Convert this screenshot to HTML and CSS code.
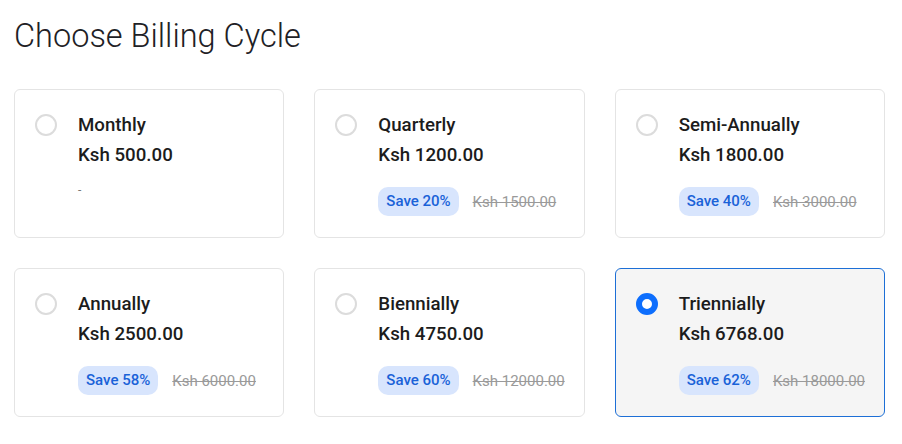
FILE: index.html
```html
<!DOCTYPE html>
<html lang="en">
<head>
    <meta charset="UTF-8">
    <meta name="viewport" content="width=device-width, initial-scale=1.0">
    <title>Choose Billing Cycle</title>
    <link rel="stylesheet" href="styles.css">
</head>
<body>
    <h1 class="title">Choose Billing Cycle</h1>
    <div class="cycles">
        <label class="cycle">
            <span class="radio"></span>
            <span class="info">
                <span class="name">Monthly</span>
                <span class="price">Ksh 500.00</span>
                <span class="meta"><span class="dash">-</span></span>
            </span>
        </label>
        <label class="cycle">
            <span class="radio"></span>
            <span class="info">
                <span class="name">Quarterly</span>
                <span class="price">Ksh 1200.00</span>
                <span class="meta"><span class="save">Save 20%</span><s class="old">Ksh 1500.00</s></span>
            </span>
        </label>
        <label class="cycle">
            <span class="radio"></span>
            <span class="info">
                <span class="name">Semi-Annually</span>
                <span class="price">Ksh 1800.00</span>
                <span class="meta"><span class="save">Save 40%</span><s class="old">Ksh 3000.00</s></span>
            </span>
        </label>
        <label class="cycle">
            <span class="radio"></span>
            <span class="info">
                <span class="name">Annually</span>
                <span class="price">Ksh 2500.00</span>
                <span class="meta"><span class="save">Save 58%</span><s class="old">Ksh 6000.00</s></span>
            </span>
        </label>
        <label class="cycle">
            <span class="radio"></span>
            <span class="info">
                <span class="name">Biennially</span>
                <span class="price">Ksh 4750.00</span>
                <span class="meta"><span class="save">Save 60%</span><s class="old">Ksh 12000.00</s></span>
            </span>
        </label>
        <label class="cycle selected">
            <span class="radio"></span>
            <span class="info">
                <span class="name">Triennially</span>
                <span class="price">Ksh 6768.00</span>
                <span class="meta"><span class="save">Save 62%</span><s class="old">Ksh 18000.00</s></span>
            </span>
        </label>
    </div>
</body>
</html>
```

FILE: styles.css
```css
body { margin: 0; padding: 14px 17px 0 14px; background: #fff; font-family: Roboto, "Liberation Sans", sans-serif; color: #1c1c1c; }
.title { font-weight: 300; font-size: 32.5px; line-height: 44px; margin: 0 0 31px 0; color: #1e2125; }
.cycles { display: grid; grid-template-columns: repeat(3, minmax(0, 1fr)); column-gap: 30px; row-gap: 30px; }
.cycle { display: flex; gap: 21px; padding: 22px 20px 0 20px; height: 149px; box-sizing: border-box; border: 1px solid #e4e4e4; border-radius: 6px; background: #fff; cursor: pointer; white-space: nowrap; }
.cycle.selected { background: #f5f5f5; border-color: #1d6fd6; }
.radio { flex: none; width: 22px; height: 22px; box-sizing: border-box; border: 2px solid #dcdcdc; border-radius: 50%; background: #fff; margin-top: 2px; }
.selected .radio { border: 6px solid #0d6efd; }
.info { display: flex; flex-direction: column; }
.name { font-size: 18.7px; font-weight: 500; line-height: 26px; }
.price { font-size: 18.7px; font-weight: 500; line-height: 26px; margin-top: 4px; }
.meta { display: flex; align-items: center; gap: 14px; margin-top: 19px; height: 29px; }
.dash { color: #777; font-size: 12px; margin-top: -24px; }
.save { background: #d8e5fd; color: #1a62d8; font-size: 15px; font-weight: 500; padding: 0 8px; line-height: 29px; border-radius: 10px; }
.old { color: #9a9a9a; font-size: 15px; }
```
